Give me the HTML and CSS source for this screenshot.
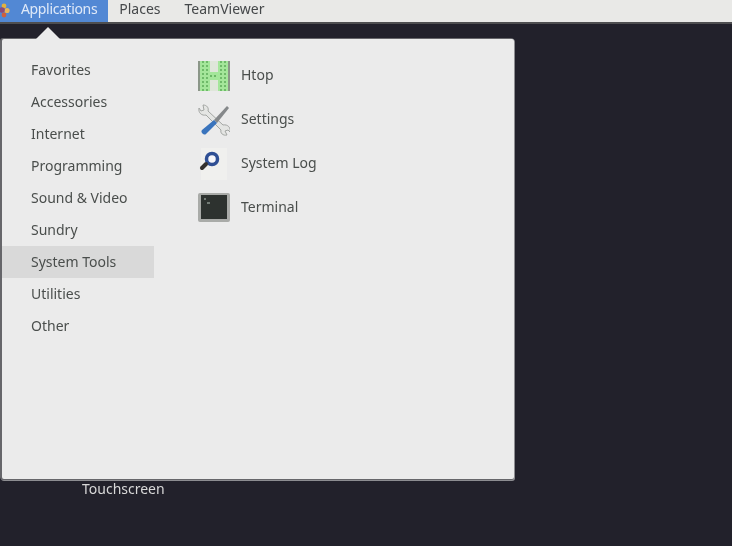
FILE: index.html
```html
<!DOCTYPE html>
<html lang="en">
<head>
  <meta charset="UTF-8" />
  <title>Applications menu</title>
  <link rel="stylesheet" href="styles.css">
</head>
<body>
  <div class="topbar">
    <div class="topbar-item active">
      <svg class="foot" width="14" height="18" viewBox="0 0 14 18">
        <circle cx="7" cy="4" r="2.4" fill="#e2b23f"/>
        <circle cx="10" cy="8.5" r="2.6" fill="#e9b45a"/>
        <circle cx="5" cy="8" r="2.8" fill="#8d4a78"/>
        <circle cx="7" cy="13" r="2.4" fill="#d0603c"/>
      </svg>
      <span>Applications</span>
    </div>
    <div class="topbar-item">Places</div>
    <div class="topbar-item">TeamViewer</div>
  </div>

  <div class="menu">
    <div class="arrow"></div>
    <ul class="categories">
      <li>Favorites</li>
      <li>Accessories</li>
      <li>Internet</li>
      <li>Programming</li>
      <li>Sound &amp; Video</li>
      <li>Sundry</li>
      <li class="selected">System Tools</li>
      <li>Utilities</li>
      <li>Other</li>
    </ul>
    <ul class="apps">
      <li>
        <svg class="app-icon" viewBox="0 0 32 32">
          <rect x="0" y="1" width="32" height="30" fill="#8b9688"/>
          <rect x="2" y="1" width="10" height="30" fill="#a4e69a"/>
          <rect x="20" y="1" width="10" height="30" fill="#a4e69a"/>
          <rect x="12" y="12" width="8" height="8" fill="#a4e69a"/>
          <rect x="12" y="1" width="8" height="11" fill="#dfe6da"/>
          <rect x="12" y="20" width="8" height="11" fill="#dfe6da"/>
          <path d="M5 1v30M9 1v30M23 1v30M27 1v30M12 16h8" stroke="#58a855" stroke-width="1.4" stroke-dasharray="2 2"/>
        </svg>
        <span>Htop</span>
      </li>
      <li>
        <svg class="app-icon" viewBox="0 0 32 32">
          <path d="M5 1l1 5-3 1-2-3c-1 5 3 8 7 7l15 15c-1 3 2 6 6 5l-2-4 3-1 2 2c1-4-2-8-7-7L10 7c1-3-1-6-5-6z" fill="#e4e5e3" stroke="#a3a6a3" stroke-width="1"/>
          <path d="M29 2l2 2-12 15-3-3z" fill="#85888a"/>
          <path d="M16 16l3 3L8 30c-2 2-6-2-4-4z" fill="#3a74bd"/>
        </svg>
        <span>Settings</span>
      </li>
      <li>
        <svg class="app-icon" viewBox="0 0 32 32">
          <rect x="3" y="0" width="26" height="32" fill="#f0f0ee"/>
          <circle cx="14" cy="11" r="5.5" fill="#f6f6fa" stroke="#2f4f94" stroke-width="3.5"/>
          <path d="M8 16l-4 4" stroke="#33302e" stroke-width="4" stroke-linecap="round"/>
        </svg>
        <span>System Log</span>
      </li>
      <li>
        <svg class="app-icon" viewBox="0 0 32 32">
          <rect x="0" y="1" width="32" height="29" rx="2" fill="#a9aba8"/>
          <rect x="3" y="3" width="26" height="24" fill="#2d322f"/>
          <path d="M6 7h2M9 11h3" stroke="#b8c4bc" stroke-width="1"/>
        </svg>
        <span>Terminal</span>
      </li>
    </ul>
  </div>

  <div class="desktop-label">Touchscreen</div>
</body>
</html>
```

FILE: styles.css
```css
* {
  box-sizing: border-box;
}
html, body {
  height: 100%;
}
body {
  margin: 0;
  overflow: hidden;
  background: #22212b;
  font-family: "Noto Sans", sans-serif;
  font-size: 14px;
  color: #4a4e4c;
}
ul {
  margin: 0;
  padding: 0;
  list-style: none;
}

.topbar, .menu, .desktop-label {
  filter: blur(0.65px);
}

.topbar {
  display: flex;
  height: 24px;
  background: #e9e9e7;
  border-bottom: 2px solid #4e4e50;
}
.topbar-item {
  display: flex;
  align-items: center;
  padding: 0 13px 5px 11px;
  color: #45484a;
}
.topbar-item.active {
  gap: 10px;
  padding: 0 11px 5px 0;
  margin-left: -3px;
  background: #5288d4;
  color: #dfe9f8;
  letter-spacing: -0.35px;
}
.foot {
  flex: none;
  margin-top: 5px;
}

.menu {
  position: relative;
  display: flex;
  width: 512px;
  height: 440px;
  margin: 15px 0 0 2px;
  padding-top: 15px;
  background: #ebebeb;
  border-radius: 2px;
  box-shadow: -1px 0 0 1px #66666a, 0 1px 0 1px #8d8d91;
}
.arrow {
  position: absolute;
  top: -12px;
  left: 34px;
  width: 24px;
  height: 12px;
  background: #ebebeb;
  clip-path: polygon(50% 0, 100% 100%, 0 100%);
}

.categories {
  width: 152px;
  flex: none;
}
.categories li {
  height: 32px;
  line-height: 32px;
  padding-left: 29px;
}
.categories .selected {
  background: #d9d9d9;
}

.apps {
  margin-left: 44px;
}
.apps li {
  display: flex;
  align-items: center;
  gap: 11px;
  height: 44px;
}
.apps span {
  padding-bottom: 3px;
}
.app-icon {
  width: 32px;
  height: 32px;
  flex: none;
  margin-top: -1px;
}

.desktop-label {
  padding-left: 82px;
  color: #d8d8d8;
}
```
